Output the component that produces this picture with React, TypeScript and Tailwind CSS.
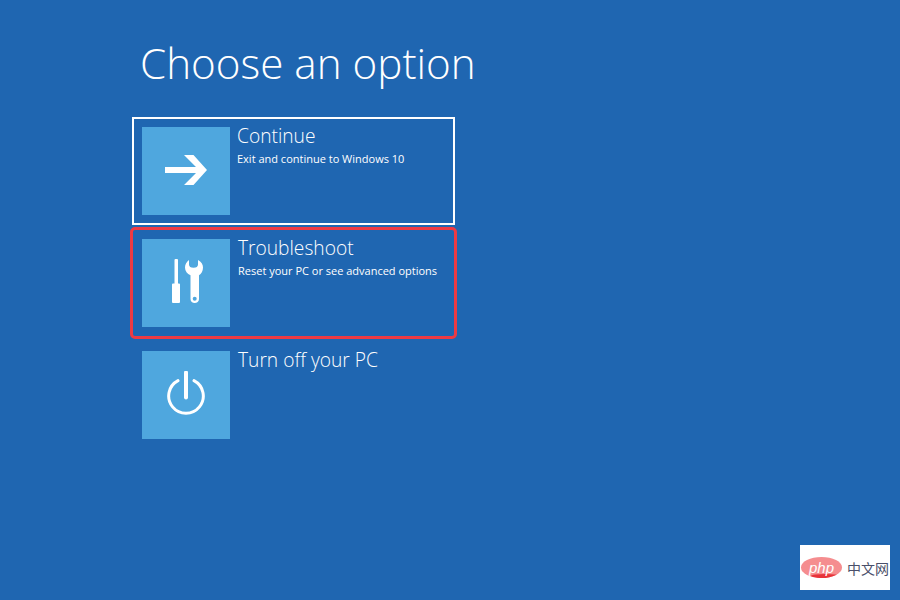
import React from "react";

const font = { fontFamily: '"Open Sans", "Noto Sans", sans-serif' };

function ArrowIcon() {
  return (
    <svg width="42" height="30" viewBox="0 0 42 30" fill="white" className="mb-[2px]">
      <path d="M0 12h31L19 0h9.500L42 15 28.500 30H19l12-12H0z" />
    </svg>
  );
}

function ToolsIcon() {
  return (
    <svg width="31" height="44" viewBox="0 0 31 44" fill="white" className="mb-[4px] ml-[3px]">
      <path d="M2.500 1a1 1 0 0 1 1-1h1.500a1 1 0 0 1 1 1v23.500h1a1 1 0 0 1 1 1V43a1 1 0 0 1-1 1H1a1 1 0 0 1-1-1V25.500a1 1 0 0 1 1-1h1.500z" />
      <path
        fillRule="evenodd"
        d="M17 1v4.500c0 2 1.500 3.300 4.500 3.300s4.500-1.300 4.500-3.300V1C29.300 2.500 31 5.500 31 8.500c0 3.500-1.700 6.300-4 7.800V40c0 2.500-2 4-4.300 4s-4.200-1.500-4.200-4V16.300c-3.300-1.500-5.500-4.300-5.500-7.800 0-3 1.700-6 4-7.500z M22.700 37.800a2 2 0 1 0 0 4 2 2 0 0 0 0-4z"
      />
    </svg>
  );
}

function PowerIcon() {
  return (
    <svg width="38" height="44" viewBox="0 0 38 44" fill="none" stroke="white" className="mb-[4px]">
      <path d="M19 1.500v25" strokeWidth="4" strokeLinecap="round" />
      <path d="M11 9.600a17.300 17.300 0 1 0 16 0" strokeWidth="3" strokeLinecap="round" />
    </svg>
  );
}

interface OptionProps {
  icon: React.ReactNode;
  title: string;
  desc?: string;
  selected?: boolean;
  highlighted?: boolean;
  titleNudge?: string;
}

function Option({ icon, title, desc, selected, highlighted, titleNudge }: OptionProps) {
  return (
    <div
      className={`relative flex h-[108px] w-[323px] gap-[7px] border-2 p-2 ${
        selected ? "border-white" : "border-transparent"
      }`}
    >
      <div className="flex h-[88px] w-[88px] shrink-0 items-center justify-center bg-[#4fa7de]">{icon}</div>
      <div className={`whitespace-nowrap text-white ${titleNudge ?? ""}`}>
        <div className="mt-[-5px] text-[19.200px] leading-[28px] font-light">{title}</div>
        <div className="mt-[1px] text-[11px] leading-[16px]">{desc}</div>
      </div>
      {highlighted && (
        <div className="absolute top-[-4px] left-[-4px] h-[112px] w-[327px] rounded-[5px] border-[3px] border-[#ee3a43]" />
      )}
    </div>
  );
}

export default function App() {
  return (
    <div className="relative h-[600px] w-[900px] overflow-hidden bg-[#1f66b1]" style={font}>
      <div className="pt-[35px] pl-[132px]">
        <h1 className="ml-[8px] text-[42.200px] leading-[56px] font-light text-white">Choose an option</h1>
        <div className="mt-[26px] flex flex-col gap-[4px]">
          <Option icon={<ArrowIcon />} title="Continue" desc="Exit and continue to Windows 10" selected />
          <Option
            icon={<ToolsIcon />}
            title="Troubleshoot"
            desc="Reset your PC or see advanced options"
            highlighted
            titleNudge="ml-[1px]"
          />
          <Option icon={<PowerIcon />} title="Turn off your PC" titleNudge="ml-[1px]" />
        </div>
      </div>
      <div className="absolute top-[545px] left-[800px] flex h-[45px] w-[90px] items-center gap-[5px] bg-white pl-[1px]">
        <div className="relative flex h-[21px] w-[41px] shrink-0 items-center justify-center overflow-hidden rounded-[50%] bg-[#f58d8f]">
          <div className="absolute right-[3px] bottom-0 h-[4px] w-[28px] rounded-[50%] bg-[#e8343a]" />
          <span
            className="relative text-[15px] leading-none text-white italic"
            style={{ fontFamily: '"Liberation Sans", sans-serif' }}
          >
            php
          </span>
        </div>
        <span
          className="shrink-0 whitespace-nowrap text-[14px] leading-none text-[#4a4f6a]"
          style={{ fontFamily: '"Noto Sans CJK SC", sans-serif' }}
        >
          中文网
        </span>
      </div>
    </div>
  );
}
